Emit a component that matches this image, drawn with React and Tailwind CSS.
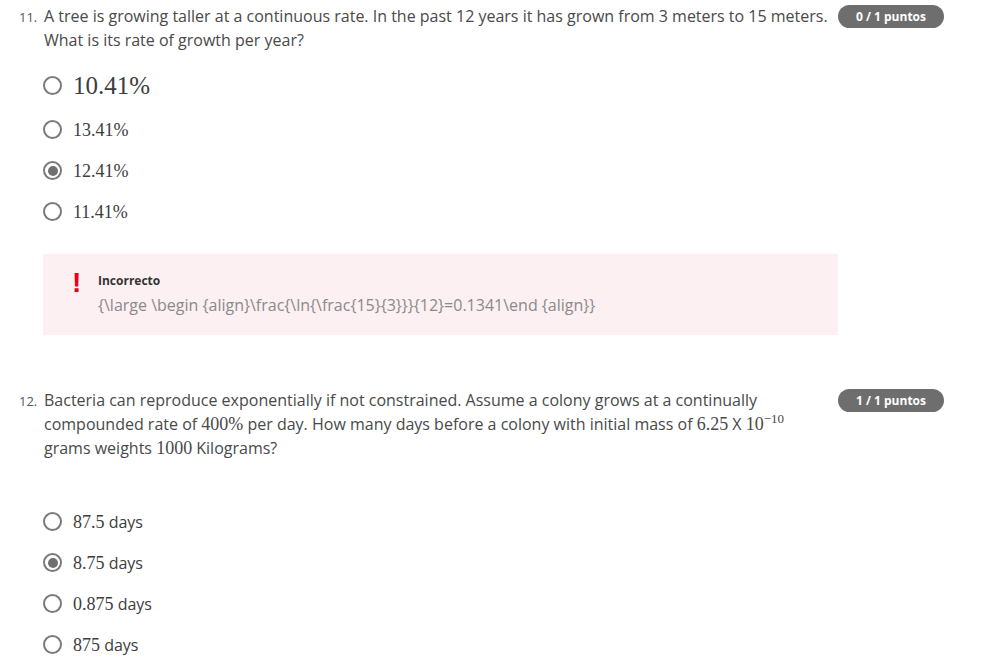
import React from "react";

const SANS = "font-['Open_Sans','Noto_Sans',sans-serif]";
const MATH = "font-['Liberation_Serif','DejaVu_Serif',serif]";

function Radio({ checked }) {
  return (
    <span className="flex h-[19px] w-[19px] shrink-0 items-center justify-center rounded-full border-2 border-[#7a7a7a] bg-white">
      {checked && <span className="h-[10px] w-[10px] rounded-full bg-[#6f6f6f]" />}
    </span>
  );
}

function Option({ checked, children, tall }) {
  return (
    <div className={`flex items-center gap-[11px] pl-[43px] ${tall ? "h-[48px]" : "h-[41px]"}`}>
      <Radio checked={checked} />
      <span className="leading-none text-[#3d3d3d]">{children}</span>
    </div>
  );
}

function Badge({ children }) {
  return (
    <span className="flex h-[23px] w-[106px] shrink-0 items-center justify-center rounded-full bg-[#6e6e6e] text-[12px] font-bold text-white">
      {children}
    </span>
  );
}

function M({ children, size = "text-[18px]" }) {
  return <span className={`${MATH} ${size} leading-none`}>{children}</span>;
}

export default function App() {
  return (
    <div className={`h-[667px] w-[982px] overflow-hidden bg-white text-[#494949] ${SANS}`}>
      {/* Question 11 */}
      <div className="flex items-start pt-[4px]">
        <div className="flex flex-1">
          <span className="w-[44px] shrink-0 pl-[19px] pt-[1px] text-[13px] leading-[24px] text-[#555]">11.</span>
          <p className="text-[16px] leading-[24px]">
            A tree is growing taller at a continuous rate. In the past 12 years it has grown from 3 meters to 15 meters. What is its rate of growth per year?
          </p>
        </div>
        <div className="ml-[10px] mr-[38px] mt-[1px]">
          <Badge>0 / 1 puntos</Badge>
        </div>
      </div>

      <div className="mt-[9px] flex flex-col">
        <Option tall>
          <M size="text-[25px]">10.41%</M>
        </Option>
        <Option>
          <M>13.41%</M>
        </Option>
        <Option checked>
          <M>12.41%</M>
        </Option>
        <Option>
          <M>11.41%</M>
        </Option>
      </div>

      <div className="ml-[43px] mt-[22px] flex h-[81px] w-[795px] items-start bg-[#fdf0f2] pl-[29px] pt-[14px]">
        <span className="w-[26px] font-['Liberation_Sans',sans-serif] text-[28px] font-bold leading-[30px] text-[#e8001c]">!</span>
        <div className="flex flex-col">
          <span className="mt-[5px] text-[12px] font-bold leading-[16px] text-[#333]">Incorrecto</span>
          <span className="mt-[6px] text-[16px] leading-[20px] text-[#8a8a8a]">
            {"{\\large \\begin {align}\\frac{\\ln{\\frac{15}{3}}}{12}=0.1341\\end {align}}"}
          </span>
        </div>
      </div>

      {/* Question 12 */}
      <div className="mt-[53px] flex items-start">
        <div className="flex flex-1">
          <span className="w-[44px] shrink-0 pl-[19px] pt-[1px] text-[13px] leading-[24px] text-[#555]">12.</span>
          <p className="text-[16px] leading-[24px]">
            Bacteria can reproduce exponentially if not constrained. Assume a colony grows at a continually
            <br />
            compounded rate of <M>400%</M> per day. How many days before a colony with initial mass of <M>6.25</M> X{" "}
            <M>
              10<sup className="relative -top-[7px] text-[13px]">−10</sup>
            </M>
            <br />
            grams weights <M>1000</M> Kilograms?
          </p>
        </div>
        <div className="ml-[10px] mr-[38px] mt-[1px]">
          <Badge>1 / 1 puntos</Badge>
        </div>
      </div>

      <div className="mt-[41px] flex flex-col">
        <Option>
          <M>87.5</M> <span className="text-[16px]">days</span>
        </Option>
        <Option checked>
          <M>8.75</M> <span className="text-[16px]">days</span>
        </Option>
        <Option>
          <M>0.875</M> <span className="text-[16px]">days</span>
        </Option>
        <Option>
          <M>875</M> <span className="text-[16px]">days</span>
        </Option>
      </div>
    </div>
  );
}
